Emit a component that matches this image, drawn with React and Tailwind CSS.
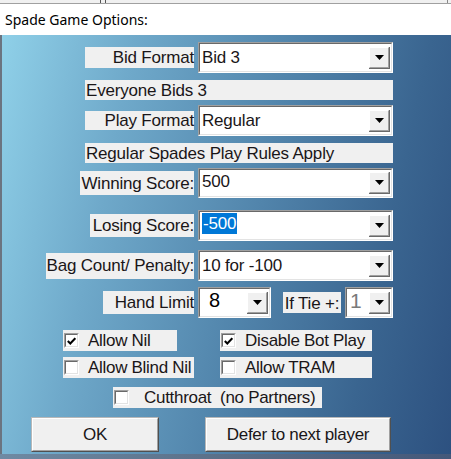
import React from "react";

const F = { fontFamily: '"Liberation Sans", Arial, sans-serif' };

function Arrow() {
  return (
    <div className="w-[21px] h-[22px] border-b border-r border-b-[#696969] border-r-[#696969]">
      <div className="w-full h-full bg-[#f0f0f0] border-t border-l border-t-white border-l-white border-b border-r border-b-[#a0a0a0] border-r-[#a0a0a0] flex items-center justify-center">
        <svg width="9" height="5" viewBox="0 0 9 5">
          <path d="M0 0 H9 L4.5 5 Z" fill="#000" />
        </svg>
      </div>
    </div>
  );
}

function Select({ w, h = 31, children }) {
  return (
    <div
      className="border-t border-l border-t-[#a0a0a0] border-l-[#a0a0a0] border-b border-r border-b-white border-r-white shrink-0"
      style={{ width: w, height: h }}
    >
      <div className="w-full h-full border-t border-l border-t-[#696969] border-l-[#696969] border-b border-r border-b-[#e3e3e3] border-r-[#e3e3e3] bg-white flex items-center pl-[2px] pr-[1px]">
        <div className="flex-1 flex items-center min-w-0 h-full">{children}</div>
        <Arrow />
      </div>
    </div>
  );
}

function Label({ w, h, children, className = "" }) {
  return (
    <div
      className={"bg-[#f0f0f0] flex items-center justify-end text-[17px] text-[#1a1618] leading-none whitespace-nowrap tracking-[-0.2px] " + className}
      style={{ width: w, height: h, ...F }}
    >
      {children}
    </div>
  );
}

function Row({ mt, label, lw, lh, value, h = 31 }) {
  return (
    <div className="flex items-center" style={{ marginTop: mt, height: h }}>
      <div className="w-[192px] flex justify-end">
        <Label w={lw} h={lh}>{label}</Label>
      </div>
      <div className="ml-[4px]">
        <Select w={195} h={h}>
          <span className="text-[17px] text-[#1a1618] leading-none tracking-[-0.2px]" style={F}>{value}</span>
        </Select>
      </div>
    </div>
  );
}

function Info({ mt, children }) {
  return (
    <div
      className="ml-[83px] w-[308px] h-[20px] bg-[#f0f0f0] flex items-center pl-[1px] text-[17px] text-[#1a1618] leading-none tracking-[-0.2px] whitespace-nowrap"
      style={{ marginTop: mt, ...F }}
    >
      {children}
    </div>
  );
}

function Check({ checked }) {
  return (
    <div className="w-[15px] h-[15px] shrink-0 border-t border-l border-t-[#a0a0a0] border-l-[#a0a0a0] border-b border-r border-b-white border-r-white">
      <div className="w-full h-full bg-white border-t border-l border-t-[#696969] border-l-[#696969] border-b border-r border-b-[#e3e3e3] border-r-[#e3e3e3] flex items-center justify-center">
        {checked && (
          <svg width="9" height="8" viewBox="0 0 9 8">
            <path d="M0.8 4 L3.3 6.5 L8.3 1.2" stroke="#000" strokeWidth="2" fill="none" />
          </svg>
        )}
      </div>
    </div>
  );
}

function CheckItem({ w, checked, children, textMl = 9 }) {
  return (
    <div
      className="h-[21px] bg-[#f0f0f0] flex items-center pl-[1px] text-[17px] text-[#1a1618] leading-none tracking-[-0.3px] whitespace-nowrap"
      style={{ width: w, ...F }}
    >
      <Check checked={checked} />
      <span style={{ marginLeft: textMl }}>{children}</span>
    </div>
  );
}

function Button({ w, children, ml }) {
  return (
    <div
      className="h-[35px] border-t border-l border-t-[#b8b8b8] border-l-[#b8b8b8] border-b border-r border-b-[#505050] border-r-[#505050]"
      style={{ width: w, marginLeft: ml }}
    >
      <div
        className="w-full h-full bg-[#f0f0f0] border-t border-l border-t-white border-l-white border-b border-r border-b-[#a0a0a0] border-r-[#a0a0a0] flex items-center justify-center text-[17px] text-[#1a1618] leading-none tracking-[-0.3px]"
        style={F}
      >
        {children}
      </div>
    </div>
  );
}

export default function App() {
  return (
    <div className="w-[451px] h-[459px] overflow-hidden bg-white relative">
      <div className="h-[4px] bg-[#f0f0f0] border-b border-b-[#a0a0a0] relative">
        <div className="absolute left-[100px] top-0 w-px h-[3px] bg-[#555]" />
        <div className="absolute left-[105px] top-0 w-px h-[3px] bg-[#555]" />
        <div className="absolute left-[447px] top-0 w-px h-[3px] bg-[#888]" />
      </div>
      <div
        className="h-[31px] bg-white flex items-center pl-[5px] text-[14px] text-black leading-none"
        style={{ fontFamily: '"Noto Sans", "Open Sans", sans-serif' }}
      >
        Spade Game Options:
      </div>
      <div className="h-[419px] border-l-2 border-l-[#6b7480] bg-[linear-gradient(102deg,#8fd0e8_0%,#6fa9ca_25%,#5184ab_55%,#3a6590_80%,#2d5180_100%)] flex flex-col">
        <Row mt={7} label="Bid Format" lw={109} lh={21} value="Bid 3" />
        <Info mt={7}>Everyone Bids 3</Info>
        <Row mt={5} label="Play Format" lw={109} lh={19} value="Regular" />
        <Info mt={7}>Regular Spades Play Rules Apply</Info>
        <Row mt={5} h={30} label="Winning Score:" lw={114} lh={24} value={<span className="relative top-[-2px]">500</span>} />
        <Row
          mt={12}
          label="Losing Score:"
          lw={104}
          lh={23}
          value={<span className="bg-[#0078d7] text-white px-[1px] py-[2px] inline-block relative top-[-2px]">-500</span>}
        />
        <Row mt={9} label="Bag Count/ Penalty:" lw={148} lh={26} value="10 for -100" />
        <div className="flex items-center h-[31px]" style={{ marginTop: 6 }}>
          <div className="w-[192px] flex justify-end">
            <Label w={91} h={23}>Hand Limit</Label>
          </div>
          <div className="ml-[4px]">
            <Select w={73}>
              <span className="text-[20px] text-black leading-none pl-[7px] relative top-[-3px]" style={F}>8</span>
            </Select>
          </div>
          <div className="ml-[12px]">
            <Label w={58} h={21} className="!justify-center pt-[1px]">If Tie +:</Label>
          </div>
          <div className="ml-[4px]">
            <Select w={48}>
              <span className="text-[21px] text-[#7a7a7a] leading-none pl-[1px] relative top-[-2px]" style={F}>1</span>
            </Select>
          </div>
        </div>
        <div className="flex ml-[61px]" style={{ marginTop: 12 }}>
          <CheckItem w={114} checked>Allow Nil</CheckItem>
          <div className="ml-[43px]">
            <CheckItem w={152} checked>Disable Bot Play</CheckItem>
          </div>
        </div>
        <div className="flex ml-[61px]" style={{ marginTop: 6 }}>
          <CheckItem w={131}>Allow Blind Nil</CheckItem>
          <div className="ml-[26px]">
            <CheckItem w={152}>Allow TRAM</CheckItem>
          </div>
        </div>
        <div className="flex ml-[111px]" style={{ marginTop: 9 }}>
          <CheckItem w={209} textMl={15}>Cutthroat&nbsp;&nbsp;(no Partners)</CheckItem>
        </div>
        <div className="flex" style={{ marginTop: 9 }}>
          <Button w={128} ml={29}>OK</Button>
          <Button w={186} ml={46}>Defer to next player</Button>
        </div>
      </div>
      <div className="h-[5px] bg-[linear-gradient(90deg,#6f8aa3,#5a6f88_50%,#44587a)]" />
    </div>
  );
}
